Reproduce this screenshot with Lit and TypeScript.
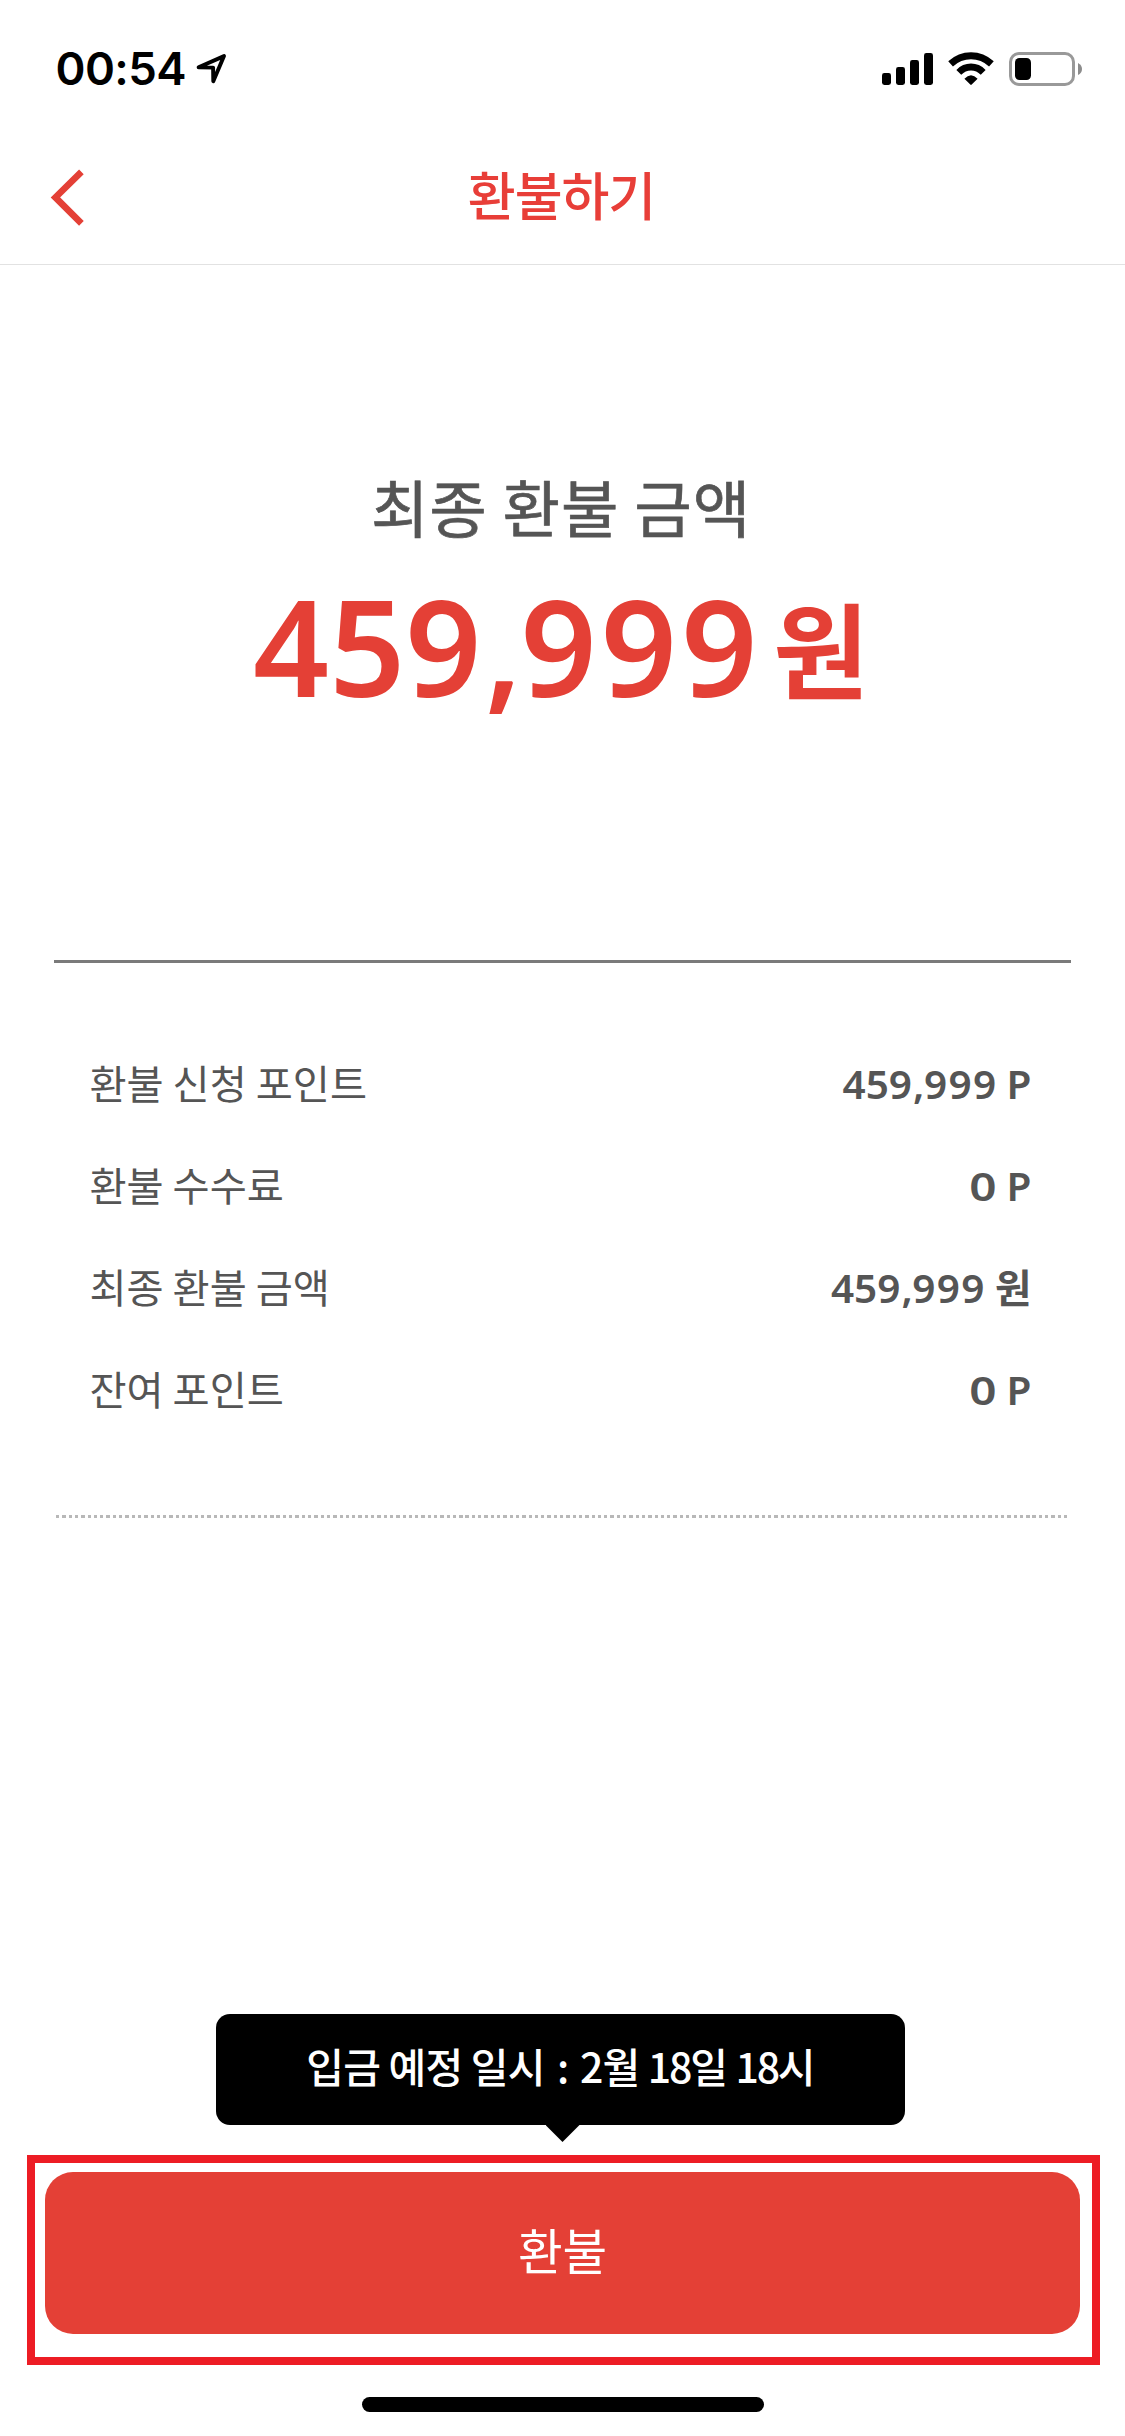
import { LitElement, html, css, nothing } from "lit";
import { customElement, property } from "lit/decorators.js";

const KR = css`"Noto Sans CJK KR", sans-serif`;
const LATIN = css`"Noto Sans", "Noto Sans CJK KR", sans-serif`;

/** Status bar: clock, location arrow, signal, wifi and battery. */
@customElement("status-bar")
class StatusBar extends LitElement {
  static styles = css`
    :host {
      display: flex;
      justify-content: space-between;
      align-items: flex-start;
      box-sizing: border-box;
      height: 121px;
      padding: 44px 42px 0 55.5px;
      font-family: Inter, sans-serif;
    }
    .left, .right { display: flex; align-items: flex-start; }
    .time {
      font-size: 45.5px;
      font-weight: 560;
      line-height: 50px;
      letter-spacing: -0.6px;
      color: #000;
    }
    .arrow { margin: 8px 0 0 9px; }
    .right { padding-top: 8px; }
    svg { display: block; }
  `;
  render() {
    return html`
      <div class="left">
        <span class="time">00:54</span>
        <svg class="arrow" width="34" height="34" viewBox="194 52 34 34">
          <path d="M197.6 67.2 L223 56.1 L212.3 81.2 L212.1 67.6 Z" fill="none" stroke="#000" stroke-width="3.9" stroke-linejoin="round"/>
        </svg>
      </div>
      <div class="right">
        <svg width="201" height="34" viewBox="882 52 201 34">
          <rect x="882" y="73" width="9" height="12" rx="2.4"/>
          <rect x="896" y="67" width="9" height="18" rx="2.4"/>
          <rect x="910" y="60" width="9" height="25" rx="2.4"/>
          <rect x="924" y="53" width="9" height="32" rx="2.4"/>
          <g fill="none" stroke="#000">
            <path d="M950.6 63.8 Q959.5 55.7 971 55.7 Q982.5 55.7 991.4 63.8" stroke-width="7"/>
            <path d="M958.8 72.3 Q964 67 971 67 Q978 67 983.2 72.3" stroke-width="6.8"/>
          </g>
          <path d="M964.4 78.8 Q971 71.6 977.6 78.8 L971.7 84.6 Q971 85.3 970.3 84.6 Z"/>
          <rect x="1010.5" y="53.5" width="63" height="31" rx="8.5" fill="none" stroke="#999" stroke-width="3"/>
          <rect x="1015" y="58" width="16" height="22" rx="4.5"/>
          <path d="M1078 63 Q1082 65 1082 69 Q1082 73 1078 75 Z" fill="#8c8c8c"/>
        </svg>
      </div>
    `;
  }
}

/** Amount with a unit; digit groups get optical spacing around the comma. */
@customElement("money-amount")
class MoneyAmount extends LitElement {
  @property() value = "";
  @property() unit = "";
  static styles = css`
    :host { display: inline-block; white-space: pre; font-family: ${LATIN}; font-weight: 580; }
    .lead { letter-spacing: 0; }
    .before { letter-spacing: 0.025em; }
    .comma { letter-spacing: -0.01em; }
    .tail { letter-spacing: 0.032em; }
    .zero { display: inline-block; transform: scaleX(1.18); transform-origin: 92% 50%; }
    .unit { line-height: 0; }
    .won {
      font-family: ${KR};
      font-weight: 700;
      line-height: 0;
      font-size: var(--won-size, 0.98em);
      margin-left: var(--won-gap, 0);
      vertical-align: var(--won-raise, baseline);
    }
  `;
  render() {
    const [head, tail] = this.value.split(",");
    const number = tail
      ? html`<span class="lead">${head.slice(0, -1)}</span><span class="before">${head.slice(-1)}</span><span class="comma">,</span><span class="tail">${tail.slice(0, -1)}</span><span>${tail.slice(-1)}</span>`
      : html`<span class="zero">${head}</span>`;
    const unit = this.unit.trim() === "원"
      ? html`${this.unit.startsWith(" ") ? " " : nothing}<span class="won">원</span>`
      : html`<span class="unit">${this.unit}</span>`;
    return html`${number}${unit}`;
  }
}

const ROWS = [
  { label: "환불 신청 포인트", value: "459,999", unit: " P" },
  { label: "환불 수수료", value: "0", unit: " P" },
  { label: "최종 환불 금액", value: "459,999", unit: " 원" },
  { label: "잔여 포인트", value: "0", unit: " P" },
];

@customElement("app-root")
class AppRoot extends LitElement {
  static styles = css`
    :host {
      display: flex;
      flex-direction: column;
      width: 1125px;
      height: 2436px;
      background: #fff;
      overflow: hidden;
      font-family: ${KR};
      color: #555;
    }
    .header {
      display: grid;
      grid-template-columns: 1fr auto 1fr;
      height: 143px;
      border-bottom: 1px solid #e2e2e2;
    }
    .back { padding: 48px 0 0 50px; }
    .back svg { display: block; }
    .title {
      margin: 0;
      padding-right: 2px;
      font-size: 52px;
      font-weight: 500;
      line-height: 146px;
      height: 143px;
      letter-spacing: -1px;
      color: #e83e38;
    }
    .hero {
      display: flex;
      flex-direction: column;
      align-items: center;
      box-sizing: border-box;
      height: 695px;
      padding: 201px 3px 0 0;
    }
    .subtitle {
      font-size: 62.5px;
      font-weight: 400;
      line-height: 80px;
      letter-spacing: 0.9px;
      -webkit-text-stroke: 0.7px currentColor;
    }
    .total {
      --won-size: 104px;
      --won-gap: 16px;
      --won-raise: 5px;
      margin-top: 29.6px;
      font-size: 133px;
      line-height: 140px;
      color: #e44036;
    }
    .details {
      margin: 0 54px;
      padding: 67.8px 39.5px 75.5px 35.4px;
      border-top: 3px solid #7a7a7a;
    }
    .row { display: flex; justify-content: space-between; align-items: baseline; height: 102.2px; }
    .label { font-size: 40.3px; line-height: 102.2px; }
    .row money-amount { font-size: 40.5px; line-height: 102.2px; }
    .dots {
      height: 3px;
      margin: 0 55.8px;
      background: repeating-linear-gradient(90deg, #b8b8b8 0 3.3px, transparent 3.3px 6.3px);
    }
    .footer { display: flex; flex-direction: column; align-items: center; margin-top: auto; }
    .tooltip {
      display: flex;
      justify-content: center;
      box-sizing: border-box;
      width: 689px;
      height: 111px;
      margin-right: 4px;
      border-radius: 14px;
      background: #000;
      color: #fff;
      font-size: 41px;
      font-weight: 500;
      line-height: 102px;
      letter-spacing: -0.8px;
      white-space: pre;
    }
    .colon { margin: 0 3px 0 4px; }
    .num { letter-spacing: -2.2px; }
    .tip { display: block; width: 34px; height: 17px; background: #000; clip-path: polygon(0 0, 100% 0, 50% 100%); }
    .frame {
      box-sizing: border-box;
      width: 1073px;
      height: 210px;
      margin: 13px 0 0 2px;
      padding: 9px 12px 23px 10px;
      border: 8px solid #ed1c24;
    }
    .button {
      display: block;
      width: 1035px;
      height: 162px;
      margin: 0;
      padding: 0 0 8px;
      border: 0;
      border-radius: 28px;
      background: #e44036;
      color: #fff;
      font: 400 48.5px/154px ${KR};
    }
    .home { width: 402px; height: 15px; margin: 32px 0 24px; border-radius: 7.5px; background: #000; }
  `;
  render() {
    return html`
      <status-bar></status-bar>
      <div class="header">
        <div class="back">
          <svg width="36" height="60" viewBox="50 169 36 60">
            <path d="M81.4 171.8 L55.4 197.4 L81.4 223.4" fill="none" stroke="#e44036" stroke-width="6.6"/>
          </svg>
        </div>
        <h1 class="title">환불하기</h1>
      </div>
      <div class="hero">
        <div class="subtitle">최종 환불 금액</div>
        <money-amount class="total" value="459,999" unit="원"></money-amount>
      </div>
      <div class="details">
        ${ROWS.map((r) => html`<div class="row">
          <span class="label">${r.label}</span>
          <money-amount .value=${r.value} .unit=${r.unit}></money-amount>
        </div>`)}
      </div>
      <div class="dots"></div>
      <div class="footer">
        <div class="tooltip"><span>입금 예정 일시 <span class="colon">:</span> 2월 <span class="num">18</span>일 <span class="num">18</span>시</span></div>
        <span class="tip"></span>
        <div class="frame"><button class="button">환불</button></div>
        <div class="home"></div>
      </div>
    `;
  }
}
